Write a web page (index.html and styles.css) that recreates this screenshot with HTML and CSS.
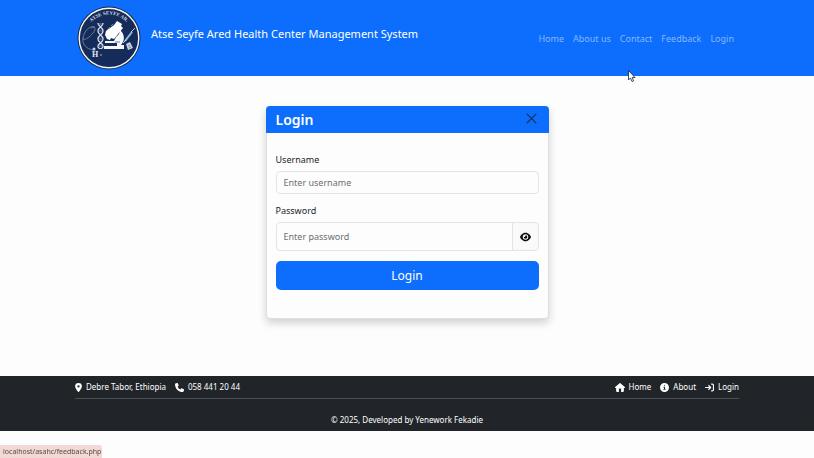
FILE: index.html
```html
<!DOCTYPE html>
<html lang="en">
<head>
<meta charset="utf-8">
<meta name="viewport" content="width=device-width, initial-scale=1">
<title>Atse Seyfe Ared Health Center Management System</title>
<link rel="stylesheet" href="styles.css">
</head>
<body>
<header class="topbar">
  <a class="brand" href="#">
    <svg class="logo" viewBox="0 0 64 64" role="img" aria-label="Atse Seyfe Ared">
      <circle cx="32" cy="32" r="31.5" fill="#18263f"/>
      <circle cx="32" cy="32" r="29.8" fill="#152c5b" stroke="#f4f7fa" stroke-width="1.4"/>
      <path id="arc" d="M10 23A24 24 0 0 1 54 23" fill="none"/>
      <text class="logo-text"><textPath href="#arc" startOffset="50%" text-anchor="middle">ATSE SEYFE AR.</textPath></text>
      <path d="M18 21C13 19 7 25 6 32c0 4 7-1 10-5 3-4 3-7-2-5M6 32c-1 7 4 11 10 12" fill="none" stroke="#7d8ca7" stroke-width=".8"/>
      <circle cx="17" cy="43" r="1.500" fill="#b9d8ef"/>
      <path d="M21 17c0 4 5 4 5 8s-5 4-5 8 5 4 5 7-2 2-2 3M26 17c0 4-5 4-5 8s5 4 5 8-5 4-5 7 2 2 2 3" fill="none" stroke="#d5dde7" stroke-width="1.400"/>
      <path d="M21 18h5M21 25h5M21 33h5M21 40h5" stroke="#8798b0" stroke-width=".8"/>
      <path d="M40 15l5 3-1 2 2 2-9 11-3-1-1 2-3-1-2-4 1-4 8-6z" fill="#fff"/>
      <path d="M43 24c5 4 5 11 1 15h3v4H27v-3h13v-3H28v-2h9l2-4 3-3z" fill="#f5f7fa"/>
      <path d="M30 24l3-3M34 20l2-2M38 36h5" stroke="#6e809e"/>
      <path d="M48 35l7-9" stroke="#91bddd" stroke-width="2"/>
      <path d="M54 26l4-4M46 37l3-3" stroke="#f4f7fa" stroke-width=".8"/>
      <path d="M49 38l4-2 3 6-5 2z" fill="#c7d0dc"/>
      <path d="M51 40l2-1M52 42l2-1" stroke="#53657f" stroke-width=".7"/>
      <text class="logo-mark" x="15" y="51">H</text>
      <circle cx="24" cy="49" r=".8" fill="#b9c7d8"/>
    </svg>
    <span>Atse Seyfe Ared Health Center Management System</span>
  </a>
  <nav class="nav">
    <a href="#">Home</a><a href="#">About us</a><a href="#">Contact</a><a href="#">Feedback</a><a href="#">Login</a>
  </nav>
</header>

<main class="main">
  <section class="card">
    <div class="card-head">
      <h1>Login</h1>
      <button class="close" type="button" aria-label="Close">
        <svg viewBox="0 0 10 10"><path d="M1 1l8 8M9 1L1 9" stroke="#15315f" stroke-width="1.200" stroke-linecap="round"/></svg>
      </button>
    </div>
    <form class="form">
      <label for="username">Username</label>
      <input class="field" id="username" type="text" placeholder="Enter username">
      <label for="password">Password</label>
      <div class="group">
        <input class="field" id="password" type="password" placeholder="Enter password">
        <button class="reveal" type="button" aria-label="Show password">
          <svg viewBox="0 0 576 512"><path fill="#0a0f16" d="M288 32c-81 0-145 37-192 80C49 156 18 208 3 244c-3 8-3 17 0 25 15 35 46 87 93 131 47 43 111 80 192 80s145-37 192-80c47-44 78-96 93-131 3-8 3-17 0-25-15-36-46-88-93-132-47-43-111-80-192-80zM144 256a144 144 0 1 1 288 0 144 144 0 1 1-288 0zm144-64c0 35-29 64-64 64-7 0-14-1-20-3-6-2-12 2-12 7a96 96 0 1 0 103-99c-5 0-9 5-10 11 2 6 3 13 3 20z"/></svg>
        </button>
      </div>
      <button class="submit" type="submit">Login</button>
    </form>
  </section>
</main>

<footer class="footer">
  <div class="footer-row">
    <div class="links">
      <span><svg class="narrow" viewBox="0 0 384 512"><path d="M216 499c51-64 168-219 168-307a192 192 0 1 0-384 0c0 88 117 243 168 307 12 16 36 16 48 0zM192 128a64 64 0 1 1 0 128 64 64 0 1 1 0-128z"/></svg>Debre Tabor, Ethiopia</span>
      <span><svg viewBox="0 0 512 512"><path d="M165 25c-8-19-29-29-49-23L28 26C11 30 0 46 0 64c0 247 201 448 448 448 18 0 34-11 38-28l24-88c6-20-4-41-23-49l-96-40c-16-7-35-2-47 12l-40 49c-71-33-127-91-160-160l49-40c14-12 19-31 12-47z"/></svg>058 441 20 44</span>
    </div>
    <nav class="links">
      <a href="#"><svg class="wide" viewBox="0 0 576 512"><path d="M576 256c0 18-15 32-32 32h-32v176c0 26-22 48-48 48H352V352c0-18-14-32-32-32h-64c-18 0-32 14-32 32v160H112c-26 0-48-22-48-48V288H32c-18 0-32-14-32-32 0-9 3-17 10-24L266 8c13-11 31-11 44 0l255 224c8 7 12 15 11 24z"/></svg>Home</a>
      <a href="#"><svg viewBox="0 0 512 512"><path fill-rule="evenodd" d="M256 0a256 256 0 1 0 0 512 256 256 0 1 0 0-512zM224 128a32 32 0 1 1 64 0 32 32 0 1 1-64 0zM192 208h96v128h32v48H192v-48h32v-80h-32z"/></svg>About</a>
      <a href="#"><svg viewBox="0 0 512 512"><path d="M217 105l128 128c13 13 13 33 0 46L217 407l-45-46 73-73H32a32 32 0 0 1 0-64h213l-73-73zM352 32h64c53 0 96 43 96 96v256c0 53-43 96-96 96h-64v-64h64c18 0 32-14 32-32V128c0-18-14-32-32-32h-64z"/></svg>Login</a>
    </nav>
  </div>
  <p>© 2025, Developed by Yenework Fekadie</p>
</footer>

<div class="status">localhost/asahc/feedback.php</div>
<svg class="cursor" viewBox="0 0 8 12" aria-hidden="true"><path d="M.5.5v9.500l2-2 1.500 3.500 1.500-.7L4.200 7.500H7z" fill="#fff" stroke="#17233d" stroke-width=".8"/></svg>
</body>
</html>
```
FILE: styles.css
```css
* { box-sizing: border-box; }
body {
  margin: 0;
  min-height: 100vh;
  background: #fdfdfd;
  color: #212529;
  font: 9px/14px "Noto Sans", "Open Sans", sans-serif;
}
a { color: inherit; text-decoration: none; }
button, input { font: inherit; color: inherit; margin: 0; }
button { padding: 0; border: 0; cursor: pointer; }
svg { display: block; }

.topbar {
  display: flex;
  justify-content: space-between;
  align-items: center;
  height: 76px;
  padding: 0 75px;
  background: #0d6efd;
}
.brand { display: flex; align-items: center; gap: 10px; color: #fff; font-size: 11px; }
.brand span { padding-bottom: 8px; }
.logo { width: 64px; height: 64px; margin-left: 2px; }
.logo-text { font: bold 5px "Liberation Serif", serif; fill: #d5dde7; }
.logo-mark { font: bold 8px "Liberation Serif", serif; fill: #e6edf5; }
.nav { display: flex; gap: 9px; padding: 2px 5px 0 0; color: #86b7fe; }

.main { display: flex; justify-content: center; padding: 30px 16px 57px; }
.card {
  width: 100%;
  max-width: 283px;
  border: 1px solid #dedede;
  border-radius: 4px;
  background: #fdfdfd;
  box-shadow: 0 4px 9px rgba(0, 0, 0, .18);
}
.card-head {
  display: flex;
  justify-content: space-between;
  align-items: center;
  height: 27px;
  margin: -1px -1px 0;
  padding: 0 12px 0 10px;
  border-radius: 4px 4px 0 0;
  background: #0d6efd;
}
h1 { margin: 0; color: #fff; font-size: 14px; line-height: 20px; font-weight: 600; }
.close { background: none; padding-bottom: 3px; }
.close svg { width: 11px; height: 11px; }
.form { display: flex; flex-direction: column; padding: 20px 9px 28px; }
.form label { margin-bottom: 4px; }
.field {
  width: 100%;
  height: 23px;
  margin-bottom: 10px;
  padding: 0 7px;
  border: 1px solid #e2e4e6;
  border-radius: 4px;
  background: #fdfdfd;
}
.field::placeholder { color: #6c6f73; opacity: 1; }
.group { display: flex; margin-bottom: 10px; }
.group .field { flex: 1; min-width: 0; height: 29px; margin: 0; border-radius: 4px 0 0 4px; }
.reveal {
  display: grid;
  place-items: center;
  width: 27px;
  margin-left: -1px;
  border: 1px solid #e2e4e6;
  border-radius: 0 4px 4px 0;
  background: #fafafa;
}
.reveal svg { width: 11px; height: 10px; }
.submit { height: 29px; border-radius: 5px; background: #0d6efd; color: #fff; font-size: 12px; }

.footer { padding: 4px 75px; background: #212529; color: #fff; font-size: 8px; }
.footer-row {
  display: flex;
  justify-content: space-between;
  padding-bottom: 4px;
  border-bottom: 1px solid #495057;
}
.links { display: flex; gap: 9px; }
.links span, .links a { display: flex; align-items: center; gap: 4px; }
.links svg { width: 9px; height: 9px; fill: #fff; }
.links .narrow { width: 7px; }
.links .wide { width: 10px; }
.footer p { margin: 14px 0 0; text-align: center; }

.status {
  position: fixed;
  left: 0;
  bottom: 0;
  padding: 0 1px 0 3px;
  border-radius: 0 3px 0 0;
  background: #f3d9d6;
  color: #55494a;
  font-size: 7px;
  line-height: 13px;
}
.cursor { position: absolute; left: 628px; top: 70px; width: 8px; height: 12px; }
```
